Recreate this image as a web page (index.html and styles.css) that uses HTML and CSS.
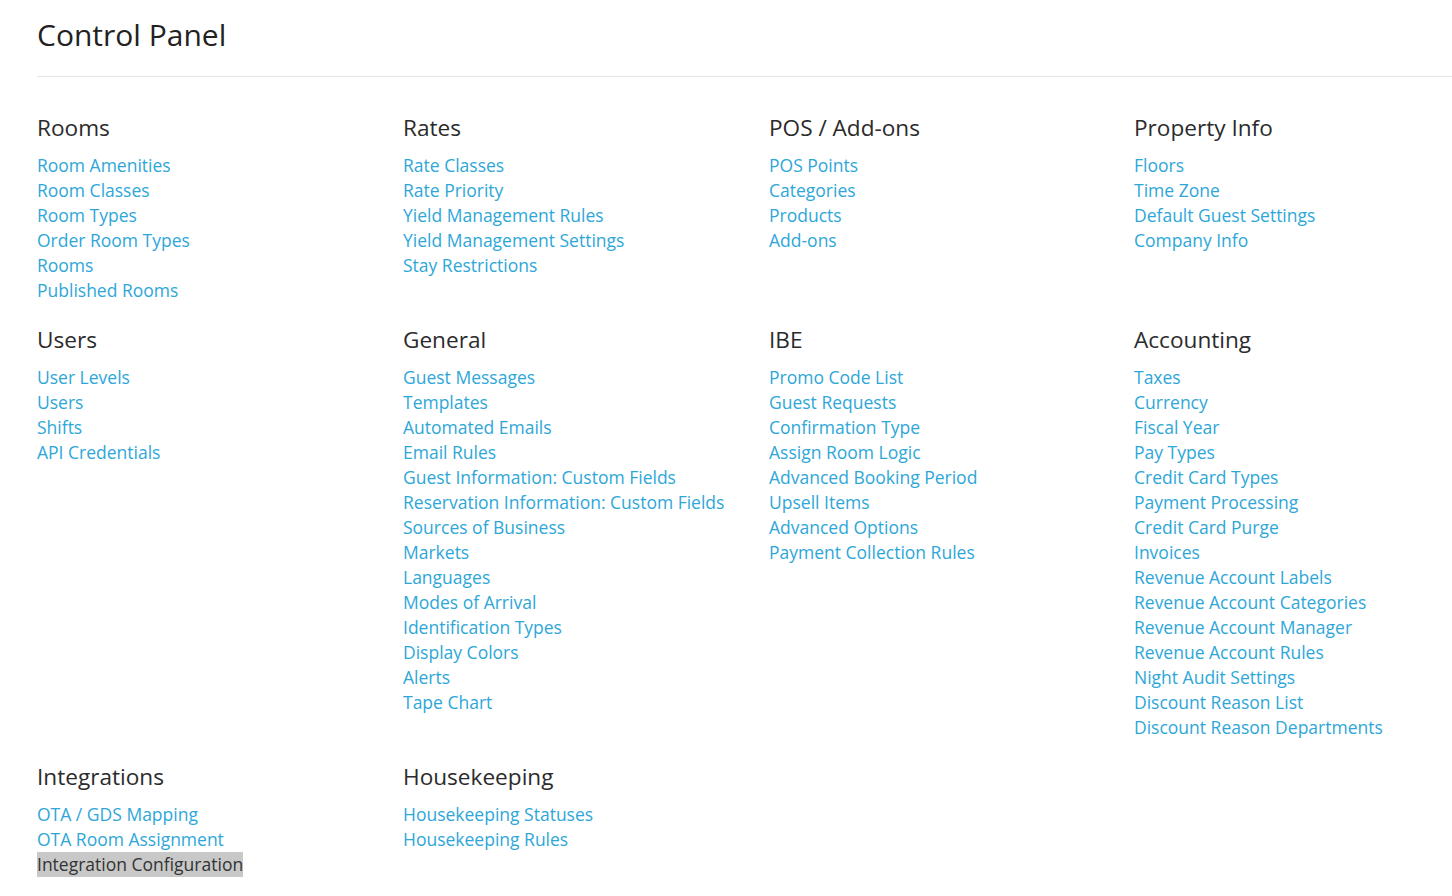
FILE: index.html
```html
<!DOCTYPE html>
<html>
<head>
<meta charset="utf-8">
<link rel="stylesheet" href="styles.css">
</head>
<body>
<div class="page">
  <h1 class="title">Control Panel</h1>
  <div class="grid">
    <section class="group">
      <h2>Rooms</h2>
      <a href="#">Room Amenities</a>
      <a href="#">Room Classes</a>
      <a href="#">Room Types</a>
      <a href="#">Order Room Types</a>
      <a href="#">Rooms</a>
      <a href="#">Published Rooms</a>
    </section>
    <section class="group">
      <h2>Rates</h2>
      <a href="#">Rate Classes</a>
      <a href="#">Rate Priority</a>
      <a href="#">Yield Management Rules</a>
      <a href="#">Yield Management Settings</a>
      <a href="#">Stay Restrictions</a>
    </section>
    <section class="group">
      <h2>POS / Add-ons</h2>
      <a href="#">POS Points</a>
      <a href="#">Categories</a>
      <a href="#">Products</a>
      <a href="#">Add-ons</a>
    </section>
    <section class="group">
      <h2>Property Info</h2>
      <a href="#">Floors</a>
      <a href="#">Time Zone</a>
      <a href="#">Default Guest Settings</a>
      <a href="#">Company Info</a>
    </section>

    <section class="group">
      <h2>Users</h2>
      <a href="#">User Levels</a>
      <a href="#">Users</a>
      <a href="#">Shifts</a>
      <a href="#">API Credentials</a>
    </section>
    <section class="group">
      <h2>General</h2>
      <a href="#">Guest Messages</a>
      <a href="#">Templates</a>
      <a href="#">Automated Emails</a>
      <a href="#">Email Rules</a>
      <a href="#">Guest Information: Custom Fields</a>
      <a href="#">Reservation Information: Custom Fields</a>
      <a href="#">Sources of Business</a>
      <a href="#">Markets</a>
      <a href="#">Languages</a>
      <a href="#">Modes of Arrival</a>
      <a href="#">Identification Types</a>
      <a href="#">Display Colors</a>
      <a href="#">Alerts</a>
      <a href="#">Tape Chart</a>
    </section>
    <section class="group">
      <h2>IBE</h2>
      <a href="#">Promo Code List</a>
      <a href="#">Guest Requests</a>
      <a href="#">Confirmation Type</a>
      <a href="#">Assign Room Logic</a>
      <a href="#">Advanced Booking Period</a>
      <a href="#">Upsell Items</a>
      <a href="#">Advanced Options</a>
      <a href="#">Payment Collection Rules</a>
    </section>
    <section class="group">
      <h2>Accounting</h2>
      <a href="#">Taxes</a>
      <a href="#">Currency</a>
      <a href="#">Fiscal Year</a>
      <a href="#">Pay Types</a>
      <a href="#">Credit Card Types</a>
      <a href="#">Payment Processing</a>
      <a href="#">Credit Card Purge</a>
      <a href="#">Invoices</a>
      <a href="#">Revenue Account Labels</a>
      <a href="#">Revenue Account Categories</a>
      <a href="#">Revenue Account Manager</a>
      <a href="#">Revenue Account Rules</a>
      <a href="#">Night Audit Settings</a>
      <a href="#">Discount Reason List</a>
      <a href="#">Discount Reason Departments</a>
    </section>

    <section class="group">
      <h2>Integrations</h2>
      <a href="#">OTA / GDS Mapping</a>
      <a href="#">OTA Room Assignment</a>
      <a href="#" class="active">Integration Configuration</a>
    </section>
    <section class="group">
      <h2>Housekeeping</h2>
      <a href="#">Housekeeping Statuses</a>
      <a href="#">Housekeeping Rules</a>
    </section>
  </div>
</div>
</body>
</html>
```

FILE: styles.css
```css
html, body {
  margin: 0;
  padding: 0;
  background: #ffffff;
  overflow: hidden;
}
body {
  font-family: "Open Sans", "Noto Sans", sans-serif;
  color: #333333;
}
.page {
  padding-left: 37px;
}
.title {
  margin: 0;
  padding-top: 14px;
  height: 77px;
  box-sizing: border-box;
  font-size: 30px;
  font-weight: 400;
  line-height: 42px;
  color: #222222;
  border-bottom: 1px solid #e6e6e6;
}
.grid {
  display: grid;
  grid-template-columns: 366px 366px 365px 1fr;
  row-gap: 22.5px;
  padding-top: 36px;
}
.group {
  display: flex;
  flex-direction: column;
  align-items: flex-start;
}
.group h2 {
  margin: 0 0 9.5px 0;
  font-size: 22.6px;
  font-weight: 400;
  line-height: 30px;
  color: #2b2b2b;
}
.group a {
  font-size: 17.5px;
  line-height: 25px;
  color: #2ea7d8;
  text-decoration: none;
  white-space: nowrap;
}
.group a.active {
  color: #333333;
  background: #c8c8c8;
}
```
